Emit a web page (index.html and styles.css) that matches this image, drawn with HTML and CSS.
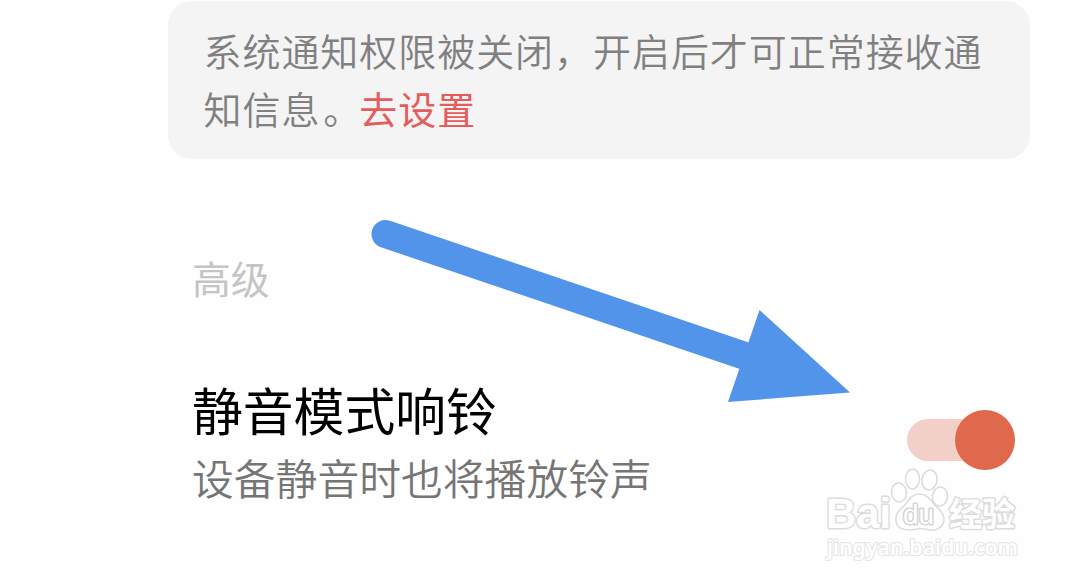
FILE: index.html
```html
<!DOCTYPE html>
<html lang="zh-CN">
<head>
<meta charset="UTF-8">
<meta name="viewport" content="width=device-width, initial-scale=1.0">
<title>通知设置</title>
<link rel="stylesheet" href="styles.css">
</head>
<body>
  <main class="page">
    <div class="notice">
      系统通知权限被关闭，开启后才可正常接收通知信息<span class="stop">。</span><a class="notice-link">去设置</a>
    </div>

    <h2 class="section-title">高级</h2>

    <div class="setting">
      <div class="setting-text">
        <div class="setting-name">静音模式响铃</div>
        <div class="setting-desc">设备静音时也将播放铃声</div>
      </div>
      <div class="switch" role="switch" aria-checked="true">
        <span class="switch-knob"></span>
      </div>
    </div>
  </main>

  <!-- arrow pointing at the switch -->
  <svg class="arrow" width="480" height="184" viewBox="370 219 480 184">
    <path d="M385.500 234 L745 356" />
    <polygon points="759.500,310 850,392.500 728,402" />
  </svg>

  <svg class="watermark" width="210" height="100" viewBox="818 464 210 100">
    <g class="mark">
      <text class="mark-bai" x="826" y="528" textLength="65" lengthAdjust="spacingAndGlyphs">Bai</text>
      <ellipse cx="899" cy="492.500" rx="7.500" ry="9.500" transform="rotate(-8 899 492.500)" />
      <ellipse cx="912.500" cy="479" rx="7" ry="10" />
      <ellipse cx="929.500" cy="480" rx="7.500" ry="10" transform="rotate(10 929.500 480)" />
      <ellipse cx="940" cy="496.500" rx="7.500" ry="9.500" transform="rotate(8 940 496.500)" />
      <path d="M919 494 C911 494 908 502 903 507 C898 511 895 515 896 521 C897 528 903 530 909 530 C914 530 916 528.500 920 528.500 C925 528.500 927 530 932 530 C939 530 944 526 944 519 C944 512 938 509 934 504 C930 499 927 494 919 494 Z" />
      <text class="mark-du" x="903" y="523.500" textLength="31" lengthAdjust="spacingAndGlyphs">du</text>
      <text class="mark-cn" x="949" y="526" textLength="66" lengthAdjust="spacingAndGlyphs">经验</text>
      <text class="mark-url" x="827" y="554.500" textLength="191" lengthAdjust="spacingAndGlyphs">jingyan.baidu.com</text>
    </g>
  </svg>
</body>
</html>
```
FILE: styles.css
```css
body {
  margin: 0;
  background-color: #fefefe;
  font-family: "Noto Sans CJK SC", sans-serif;
  overflow: hidden;
}
.page {
  box-sizing: border-box;
  width: 1076px;
  height: 584px;
  padding: 1px 46px 0 168px;
}
.notice {
  box-sizing: border-box;
  height: 157.5px;
  padding: 20px 36px 0 35.5px;
  border-radius: 24px;
  background-color: #f4f4f4;
  color: #808080;
  font-size: 38px;
  font-weight: 350;
  letter-spacing: 0.95px;
  line-height: 58px;
}
.stop {
  margin-left: 3px;
  margin-right: -3px;
}
.notice-link {
  color: #e55c5c;
  font-weight: 400;
}
.section-title {
  margin: 89px 0 0 24px;
  color: #c4c4c4;
  font-size: 38.8px;
  font-weight: 400;
  line-height: 58px;
}
.setting {
  display: flex;
  justify-content: space-between;
  padding: 66.5px 15px 0 24px;
}
.setting-name {
  color: #000;
  font-size: 50.8px;
  font-weight: 400;
  line-height: 74px;
}
.setting-desc {
  color: #757575;
  font-size: 41.8px;
  font-weight: 350;
  line-height: 62px;
}
.switch {
  display: flex;
  align-items: center;
  justify-content: flex-end;
  width: 108px;
  height: 42px;
  margin-top: 47px;
  border-radius: 21px;
  background: linear-gradient(to right, #f2cfc7 85px, transparent 85px);
}
.switch-knob {
  flex: none;
  width: 60px;
  height: 60px;
  border-radius: 50%;
  background-color: #e0684b;
}
.arrow {
  position: absolute;
  left: 370px;
  top: 219px;
}
.arrow path {
  fill: none;
  stroke: #5294e9;
  stroke-width: 28;
  stroke-linecap: round;
}
.arrow polygon {
  fill: #5294e9;
}
.watermark {
  position: absolute;
  left: 818px;
  top: 464px;
}
.mark {
  fill: #fff;
  stroke: #dcdcdc;
  stroke-width: 1.6;
  stroke-linejoin: round;
}
.mark text {
  paint-order: stroke;
  stroke-width: 3;
}
.mark-bai {
  font: bold 43px "Liberation Sans", sans-serif;
}
.mark .mark-du {
  font: 27px "Liberation Sans", sans-serif;
  stroke: #d4d4d4;
}
.mark-cn {
  font: bold 33px "Noto Sans CJK SC", sans-serif;
}
.mark .mark-url {
  font: 600 21px "Noto Sans", sans-serif;
  stroke: #e4e4e4;
  stroke-width: 2;
}
```
